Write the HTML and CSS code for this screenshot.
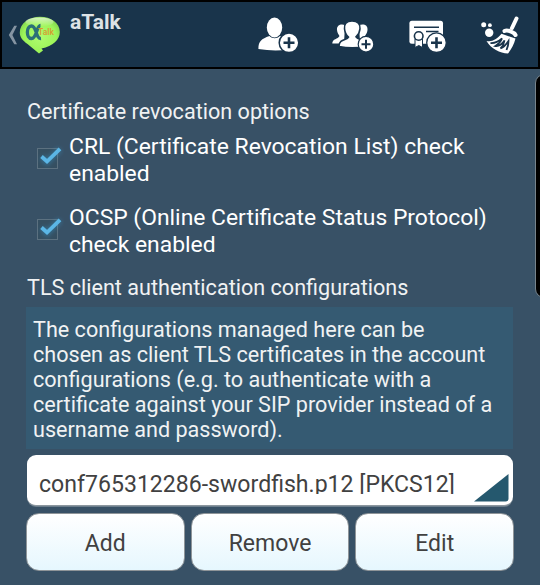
FILE: index.html
```html
<!DOCTYPE html>
<html lang="en">
<head>
<meta charset="utf-8">
<title>aTalk</title>
<link rel="stylesheet" href="styles.css">
</head>
<body>
<header class="bar">
  <svg class="back" width="10" height="20" viewBox="0 0 10 20"><path d="M9 .8H6.300L.8 10l5.500 9.200H9L4.400 10z" fill="#8594a2"/></svg>
  <div class="logo">
    <svg width="42" height="38" viewBox="0 0 42 38">
      <defs><radialGradient id="g" cx=".5" cy=".55" r=".55"><stop offset="0" stop-color="#b0fb70"/><stop offset=".75" stop-color="#9cf458"/><stop offset="1" stop-color="#86d852"/></radialGradient>
      <linearGradient id="s" x2="0" y2="1"><stop offset="0" stop-color="#fff" stop-opacity=".65"/><stop offset="1" stop-color="#fff" stop-opacity="0"/></linearGradient></defs>
      <path d="M21 .8C32 .8 40.800 7 40.800 16c0 8-6.800 14-18.300 16.500L24 34.500l-4 3L8.500 28C3.500 24.500.8 21 .8 16.500.8 7.500 10 .8 21 .8z" fill="url(#g)"/>
      <ellipse cx="20.500" cy="6" rx="14" ry="4.500" fill="url(#s)"/>
      <path d="M21.500 9.500C17.500 9.500 18 22.500 12.500 22.500 7 22.500 7 10 12.500 10c5.500 0 4 13 9.500 12.500" fill="none" stroke="#2c6f78" stroke-width="3.300"/>
    </svg>
    <span class="logo-text">Talk</span>
  </div>
  <h1 class="title">aTalk</h1>
  <nav class="actions">
    <svg width="42" height="36" viewBox="0 0 42 36" fill="#fff">
      <ellipse cx="16.500" cy="10.500" rx="7.700" ry="10"/>
      <path d="M.4 32c0-8 3-10 11-13 3 3 7.500 3 10.500 0 4 1.500 8 2.500 9 6v7.500Q16 34.500.4 32z"/>
      <circle cx="31" cy="25.800" r="9.800" stroke="#19344b" stroke-width="1.500"/>
      <path d="M31 20.300v11M25.500 25.800h11" stroke="#19344b" stroke-width="2.600"/>
    </svg>
    <svg width="42" height="32" viewBox="0 0 42 32" fill="#fff">
      <path d="M13 5C9 3.500 4.500 5 5 10c.3 3 1.500 4.500 2.500 6C6 19.500.3 18.500.3 23.500H12zM27 5c5-1.500 9 0 8.500 5-.3 3-1.500 4.500-2.500 6 2 3 5 3 6 6H28z"/>
      <path d="M20 1c-6 0-8 3.500-7.500 7.800.3 3.500 2 6.500 4 8.300C15 20.500 7 18.500 7 26.500q13 2.500 27 0c0-8-8-6-10-9.700 2-1.800 3.700-4.500 4-8C28.500 4.500 26 1 20 1z" stroke="#19344b" stroke-width="1.600"/>
      <circle cx="34" cy="24.200" r="7.800" stroke="#19344b" stroke-width="1.200"/>
      <path d="M34 19.700v9M29.500 24.200h9" stroke="#19344b" stroke-width="2"/>
    </svg>
    <svg width="38" height="34" viewBox="0 0 38 34" fill="#fff">
      <rect x=".4" y="1.800" width="33.600" height="23" rx="2.500"/>
      <path d="M5 8.300h25M17 12.500h12.500" stroke="#19344b" stroke-width="1.400"/>
      <path d="M6 20h7.500v8.500l-3.700-2-3.800 2z" stroke="#19344b" stroke-width="1"/>
      <circle cx="9.700" cy="17" r="4.300" stroke="#19344b" stroke-width="1.600"/>
      <circle cx="27.500" cy="23.700" r="9.800" stroke="#19344b" stroke-width="1.300"/>
      <path d="M27.500 18.200v11M22 23.700h11" stroke="#19344b" stroke-width="2.600"/>
    </svg>
    <svg width="40" height="38" viewBox="0 0 40 38" fill="#fff">
      <circle cx="2.700" cy="8.700" r="2.500"/><circle cx="8.900" cy="9.200" r="1.900"/><circle cx="8.200" cy="16.800" r="4.200"/>
      <path d="M35.500 2.500 31 12" stroke="#fff" stroke-width="4" stroke-linecap="round"/>
      <path d="M23.500 15c3-1.500 9.500 1 11 4" fill="none" stroke="#fff" stroke-width="4" stroke-linecap="round"/>
      <path d="M20.500 17.800 34.500 22.500c-1.500 6-4 10.500-7.500 15C19 37 10 33 5.500 25c6 1 10-1.500 15-7.200z"/>
      <path d="M9.500 27c4.500.5 8-1.500 11.500-4.500-1.500 4-3.500 5.500-6.500 7.500 4 .5 7-2.500 9-5.500-.5 4-1.500 5.500-4 8 4-1.500 6-4.500 8-7.500 0 3.500-.7 6-2 9" fill="none" stroke="#19344b" stroke-width="1.800"/>
    </svg>
  </nav>
</header>
<main class="page">
  <h2 class="heading">Certificate revocation options</h2>
  <label class="option">
    <svg class="check" width="30" height="28" viewBox="0 0 30 28"><rect x="3.500" y="5.500" width="20" height="20" fill="#354f61" stroke="#5c7180"/><path class="glow" d="M8 14l5 5L26 6"/><path d="M7.500 13.500 13 18.500 26 5.800" fill="none" stroke="#5bb6e6" stroke-width="3.800"/></svg>
    <span>CRL (Certificate Revocation List) check<br>enabled</span>
  </label>
  <label class="option">
    <svg class="check" width="30" height="28" viewBox="0 0 30 28"><rect x="3.500" y="5.500" width="20" height="20" fill="#354f61" stroke="#5c7180"/><path class="glow" d="M8 14l5 5L26 6"/><path d="M7.500 13.500 13 18.500 26 5.800" fill="none" stroke="#5bb6e6" stroke-width="3.800"/></svg>
    <span>OCSP (Online Certificate Status Protocol)<br>check enabled</span>
  </label>
  <h2 class="heading second">TLS client authentication configurations</h2>
  <p class="info">The configurations managed here can be<br>chosen as client TLS certificates in the account<br>configurations (e.g. to authenticate with a<br>certificate against your SIP provider instead of a<br>username and password).</p>
  <div class="select">
    <span class="value">conf765312286-swordfish.p12 [PKCS12]</span>
    <svg class="corner" width="35" height="28" viewBox="0 0 35 28"><path d="M34.500 0v24.500q0 3-3 3H0z" fill="#25586e"/></svg>
  </div>
  <div class="buttons">
    <button>Add</button><button>Remove</button><button>Edit</button>
  </div>
</main>
<div class="edge"></div>
</body>
</html>
```
FILE: styles.css
```css
* { box-sizing: border-box; }
body {
  margin: 0;
  width: 540px;
  height: 585px;
  overflow: hidden;
  background: #385166;
  color: #f0f2f3;
  font-family: Roboto, "Liberation Sans", sans-serif;
  position: relative;
}
.bar {
  height: 69px;
  display: flex;
  align-items: flex-start;
  background: #19344b;
  border: 2px solid #000;
  padding-left: 6px;
}
.back { margin-top: 23px; }
.logo { position: relative; margin: 14px 0 0 1px; height: 38px; }
.logo-text {
  position: absolute;
  left: 19px;
  top: 11px;
  font-size: 8.500px;
  line-height: 10px;
  font-weight: 500;
  color: #d79a30;
}
.title {
  margin: 8px 0 0 9px;
  font-size: 21px;
  line-height: 25px;
  font-weight: 700;
  color: #dde2e6;
  width: 188px;
}
.actions { display: flex; align-items: flex-start; }
.actions svg { margin-top: 15px; flex: none; }
.actions svg:nth-child(2) { margin: 18px 0 0 32px; }
.actions svg:nth-child(3) { margin: 17px 0 0 35px; }
.actions svg:nth-child(4) { margin: 14px 0 0 34px; }
.page { padding: 30px 27px 0; }
.heading {
  margin: 0;
  font-size: 21.600px;
  line-height: 25px;
  font-weight: 400;
  white-space: nowrap;
}
.option {
  display: flex;
  margin-top: 9px;
  height: 54px;
  font-size: 22.880px;
  line-height: 27px;
  color: #fff;
  white-space: nowrap;
}
.option + .option { margin-top: 17px; }
.check { flex: none; margin: 10px 5px 0 7px; }
.glow { fill: none; stroke: #39a7e0; stroke-width: 6px; opacity: .35; filter: blur(2px); }
.second { margin-top: 17px; }
.info {
  margin: 7px 0 0 -1px;
  height: 142px;
  padding: 10px 7px;
  background: #355a72;
  font-size: 21.600px;
  line-height: 25px;
  white-space: nowrap;
}
.select {
  display: flex;
  justify-content: space-between;
  margin-top: 6px;
  height: 51px;
  padding: 16px 4px 0 12px;
  background: #fff;
  border-radius: 9px;
  border-bottom: 1px solid #8b969e;
  box-shadow: 0 1px 0 #6d7f8d;
  color: #414141;
  font-size: 23.080px;
  line-height: 27px;
  white-space: nowrap;
}
.value { height: 23px; overflow: hidden; }
.corner { margin-top: 3px; }
.buttons { display: flex; gap: 6px; margin: 7px -1px 0; }
button {
  flex: 1;
  height: 58px;
  padding: 2px 0 0;
  border: 1px solid #8f9599;
  border-radius: 13px;
  background: linear-gradient(#fff, #e6f7fe);
  color: #414141;
  font: 23px/27px Roboto, "Liberation Sans", sans-serif;
}
.edge {
  position: absolute;
  right: -20px;
  top: 74px;
  width: 25px;
  height: 224px;
  background: #000;
  border: 1px solid #77848d;
  border-radius: 9px;
}
```
